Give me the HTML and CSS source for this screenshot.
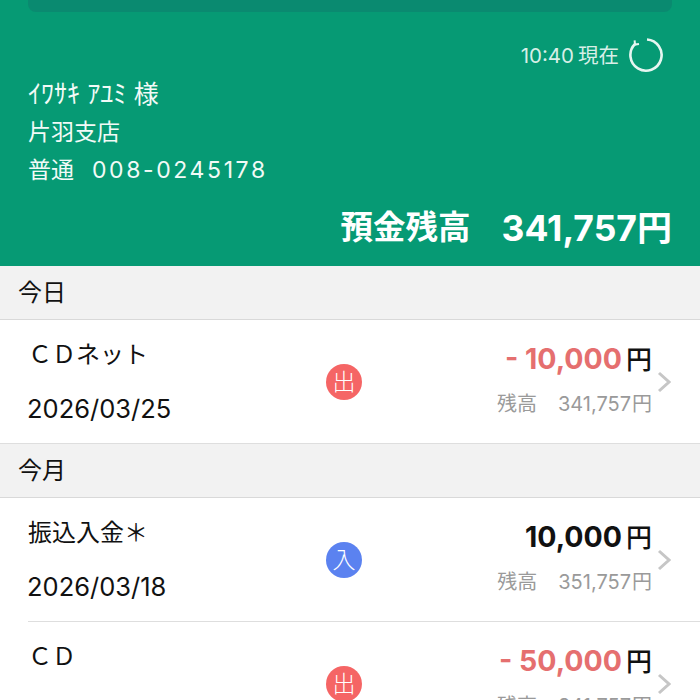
FILE: index.html
```html
<!DOCTYPE html>
<html lang="ja">
<head>
    <meta charset="UTF-8">
    <meta name="viewport" content="width=device-width, initial-scale=1.0">
    <title>入出金明細</title>
    <link rel="stylesheet" href="styles.css">
</head>
<body>
    <div class="account">
        <div class="top-bar"></div>
        <div class="updated">
            <span>10:40<span class="now">現在</span></span>
            <svg class="reload" width="36" height="36" viewBox="0 0 36 36" fill="none" stroke="#e6f6f1" stroke-width="2.6">
                <path d="M19 2.5A15.6 15.6 0 1 1 7 7"/>
                <path d="M6.6 3.4L7 7.6 11 7" stroke-width="2"/>
            </svg>
        </div>
        <div class="name">ｲﾜｻｷ ｱﾕﾐ <span class="name-suffix">様</span></div>
        <div class="branch">片羽支店</div>
        <div class="number"><span>普通</span><span class="digits">008-0245178</span></div>
        <div class="balance"><span class="balance-label">預金残高</span><span class="balance-value">341,757<span class="yen">円</span></span></div>
    </div>

    <div class="section-title">今日</div>
    <div class="row">
        <div class="row-left">
            <div class="label">ＣＤネット</div>
            <div class="date">2026/03/25</div>
        </div>
        <div class="badge out">出</div>
        <div class="row-right">
            <div class="amount minus">- 10,000<span class="unit">円</span></div>
            <div class="rest"><span>残高</span><span>341,757<span class="rest-yen">円</span></span></div>
        </div>
        <svg class="chevron" width="14" height="22" viewBox="0 0 14 22" fill="none" stroke="#c6c6c6" stroke-width="3">
            <path d="M2 2l10 9-10 9"/>
        </svg>
    </div>

    <div class="section-title">今月</div>
    <div class="row">
        <div class="row-left">
            <div class="label">振込入金＊</div>
            <div class="date">2026/03/18</div>
        </div>
        <div class="badge in">入</div>
        <div class="row-right">
            <div class="amount">10,000<span class="unit">円</span></div>
            <div class="rest"><span>残高</span><span>351,757<span class="rest-yen">円</span></span></div>
        </div>
        <svg class="chevron" width="14" height="22" viewBox="0 0 14 22" fill="none" stroke="#c6c6c6" stroke-width="3">
            <path d="M2 2l10 9-10 9"/>
        </svg>
    </div>
    <div class="row-line"></div>
    <div class="row">
        <div class="row-left">
            <div class="label">ＣＤ</div>
        </div>
        <div class="badge out">出</div>
        <div class="row-right">
            <div class="amount minus">- 50,000<span class="unit">円</span></div>
            <div class="rest"><span>残高</span><span>341,757<span class="rest-yen">円</span></span></div>
        </div>
        <svg class="chevron" width="14" height="22" viewBox="0 0 14 22" fill="none" stroke="#c6c6c6" stroke-width="3">
            <path d="M2 2l10 9-10 9"/>
        </svg>
    </div>
</body>
</html>
```

FILE: styles.css
```css
html, body {
    height: 700px;
    overflow: hidden;
}

body {
    margin: 0;
    background-color: #fff;
    color: #111;
    font-family: "Inter", "Noto Sans CJK JP", sans-serif;
}

/* account header */
.account {
    box-sizing: border-box;
    height: 266px;
    padding: 0 28px;
    background-color: #069a74;
    color: #f2faf7;
    font-size: 23px;
}

.top-bar {
    height: 12px;
    margin-bottom: 25px;
    background-color: #0a8a70;
    border-radius: 0 0 8px 8px;
}

.updated {
    display: flex;
    justify-content: flex-end;
    align-items: center;
    gap: 9px;
    height: 36px;
    margin-right: 8px;
    font-size: 20.5px;
    color: #d8efe7;
}

.updated span {
    margin-bottom: 3px;
}

.now {
    margin-left: 4px;
}

.name {
    margin-top: 2px;
    font-size: 26px;
    line-height: 38px;
}

.name-suffix {
    font-size: 25px;
}

.branch {
    line-height: 38px;
}

.number {
    display: flex;
    gap: 18px;
    line-height: 38px;
}

.digits {
    letter-spacing: 2.6px;
}

.balance {
    display: flex;
    justify-content: flex-end;
    gap: 31px;
    margin-top: 17px;
    color: #fff;
    font-weight: bold;
    line-height: 44px;
}

.balance-label {
    font-size: 32.5px;
}

.balance-value {
    font-size: 35.5px;
}

.yen {
    font-size: 35px;
}

/* list */
.section-title {
    box-sizing: border-box;
    height: 54px;
    padding-left: 18px;
    background-color: #f2f2f2;
    border-bottom: 1px solid #d9d9d9;
    font-size: 24px;
    line-height: 53px;
}

.row + .section-title {
    height: 55px;
    border-top: 1px solid #dedede;
}

.row {
    display: flex;
    align-items: center;
    box-sizing: border-box;
    height: 123px;
    padding-left: 28px;
}

.row-line {
    height: 1px;
    margin-left: 28px;
    background-color: #dedede;
}

.row-left {
    align-self: flex-start;
    width: 298px;
    padding-top: 17px;
}

.label {
    font-size: 24px;
    line-height: 36px;
}

.date {
    margin-top: 18px;
    margin-left: -1px;
    font-size: 25.5px;
    line-height: 36px;
}

.badge {
    width: 36px;
    height: 36px;
    border-radius: 50%;
    color: #fff;
    font-size: 23px;
    font-weight: 300;
    line-height: 36px;
    text-align: center;
}

.badge.out {
    background-color: #f56565;
}

.badge.in {
    background-color: #5b82f0;
}

.row-right {
    flex: 1;
    margin-bottom: 6px;
    text-align: right;
}

.amount {
    font-size: 28.5px;
    font-weight: bold;
    line-height: 40px;
}

.amount.minus {
    color: #e56f6f;
}

.unit {
    margin-left: 4px;
    color: #111;
    font-size: 26px;
    font-weight: 500;
}

.rest {
    display: flex;
    justify-content: flex-end;
    gap: 21px;
    margin-top: 10px;
    color: #9a9a9a;
    font-size: 20px;
    line-height: 28px;
}

.rest-yen {
    margin-left: 1px;
}

.chevron {
    flex: none;
    margin: 0 29px 0 5px;
}
```
